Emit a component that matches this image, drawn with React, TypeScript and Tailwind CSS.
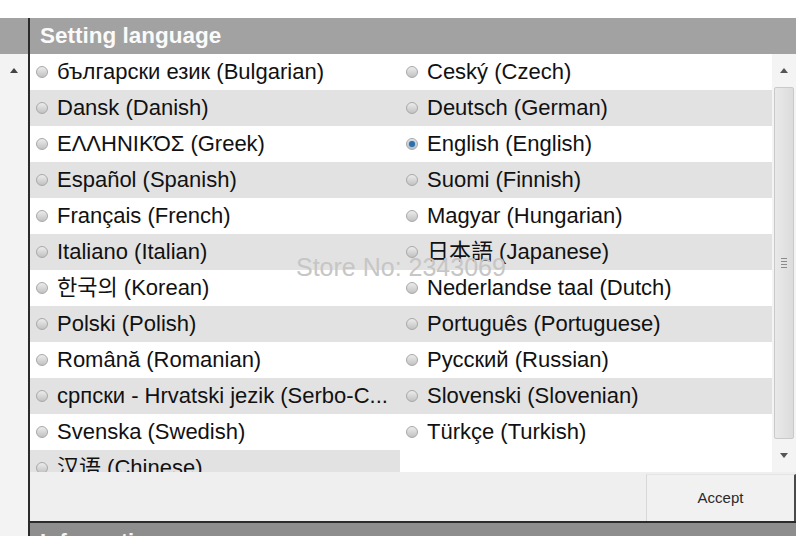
import React from "react";

const rows: [string, string][] = [
  ["български език (Bulgarian)", "Ceský (Czech)"],
  ["Dansk (Danish)", "Deutsch (German)"],
  ["ΕΛΛΗΝΙΚΌΣ (Greek)", "English (English)"],
  ["Español (Spanish)", "Suomi (Finnish)"],
  ["Français (French)", "Magyar (Hungarian)"],
  ["Italiano (Italian)", "日本語 (Japanese)"],
  ["한국의 (Korean)", "Nederlandse taal (Dutch)"],
  ["Polski (Polish)", "Português (Portuguese)"],
  ["Română (Romanian)", "Русский (Russian)"],
  ["српски - Hrvatski jezik (Serbo-C...", "Slovenski (Slovenian)"],
  ["Svenska (Swedish)", "Türkçe (Turkish)"],
  ["汉语 (Chinese)", ""],
];

function Radio({ checked }: { checked?: boolean }) {
  return (
    <span className="relative flex h-[12px] w-[12px] shrink-0 items-center justify-center rounded-full border border-[#a8a8a8] bg-gradient-to-b from-[#ececec] to-[#c2c2c2]">
      {checked && (
        <span className="h-[6px] w-[6px] rounded-full bg-[#2f6fa8] shadow-[0_0_2px_#5aa0e0]" />
      )}
    </span>
  );
}

function Cell({ label, checked, w }: { label: string; checked?: boolean; w: string }) {
  if (!label) return <div className={`${w} h-full bg-white`} />;
  return (
    <div className={`${w} flex h-full items-center gap-[9px] pl-[6px]`}>
      <Radio checked={checked} />
      <span className="whitespace-nowrap text-[22px] leading-[36px] text-[#111]">{label}</span>
    </div>
  );
}

export default function App() {
  return (
    <div
      className="relative flex h-[536px] w-[800px] flex-col overflow-hidden bg-white"
      style={{ fontFamily: '"Liberation Sans", Arial, "Noto Sans CJK SC", "Noto Sans CJK KR", sans-serif' }}
    >
      <div className="h-[18px] shrink-0 bg-white" />
      <div className="flex min-h-0 flex-1">
        {/* left strip */}
        <div className="flex w-[28px] shrink-0 flex-col">
          <div className="h-[36px] bg-[#a2a2a2]" />
          <div className="flex flex-1 justify-center bg-[#f3f3f3] pt-[14px]">
            <span className="h-0 w-0 border-x-[4px] border-b-[5px] border-x-transparent border-b-[#444]" />
          </div>
        </div>
        <div className="w-[2px] shrink-0 bg-[#2b2b2b]" />
        {/* main panel */}
        <div className="flex w-[766px] shrink-0 flex-col">
          <div className="flex h-[36px] shrink-0 items-center bg-[#a2a2a2] pl-[10px]">
            <span className="text-[22.5px] font-bold text-[#fafafa]">Setting language</span>
          </div>
          <div className="flex h-[418px] shrink-0">
            <div className="flex w-[742px] flex-col overflow-hidden">
              {rows.map(([l, r], i) => (
                <div
                  key={i}
                  className={`flex h-[36px] shrink-0 overflow-hidden ${i % 2 === 1 ? "bg-[#e2e2e2]" : "bg-white"}`}
                >
                  <Cell label={l} w="w-[370px]" />
                  <Cell label={r} w="w-[372px]" checked={r.startsWith("English")} />
                </div>
              ))}
            </div>
            {/* scrollbar */}
            <div className="flex w-[24px] flex-col items-center bg-[#f4f4f4]">
              <div className="flex h-[33px] w-full items-center justify-center">
                <span className="h-0 w-0 border-x-[4px] border-b-[5px] border-x-transparent border-b-[#555]" />
              </div>
              <div className="flex h-[352px] w-[20px] items-center justify-center rounded-[2px] border border-[#c9c9c9] bg-gradient-to-r from-[#e9e9e9] to-[#dcdcdc]">
                <div className="flex flex-col gap-[2px]">
                  <span className="h-px w-[6px] bg-[#8a8a8a]" />
                  <span className="h-px w-[6px] bg-[#8a8a8a]" />
                  <span className="h-px w-[6px] bg-[#8a8a8a]" />
                  <span className="h-px w-[6px] bg-[#8a8a8a]" />
                </div>
              </div>
              <div className="flex w-full flex-1 items-center justify-center">
                <span className="h-0 w-0 border-x-[4px] border-t-[5px] border-x-transparent border-t-[#555]" />
              </div>
            </div>
          </div>
          <div className="flex h-[49px] shrink-0 justify-end bg-[#efefef] pt-[2px]">
            <button className="flex h-full w-[150px] items-center justify-center border-l border-t border-r-2 border-l-[#d8d8d8] border-t-[#e4e4e4] border-r-[#4a4a4a] bg-[#f1f1f1] text-[15px] text-[#2a2a2a]">
              Accept
            </button>
          </div>
          <div className="h-[2px] shrink-0 bg-[#2b2b2b]" />
          <div className="flex-1 overflow-hidden bg-[#8e8e8e] pl-[10px]">
            <span className="block pt-[6px] text-[22px] font-bold leading-[26px] text-[#f4f4f4]">Information</span>
          </div>
        </div>
        <div className="flex-1 bg-white" />
      </div>
      {/* watermark */}
      <div className="pointer-events-none absolute left-[296px] top-[255px] text-[25px] leading-none text-[#c6c6c6]">
        Store No: 2343069
      </div>
    </div>
  );
}
